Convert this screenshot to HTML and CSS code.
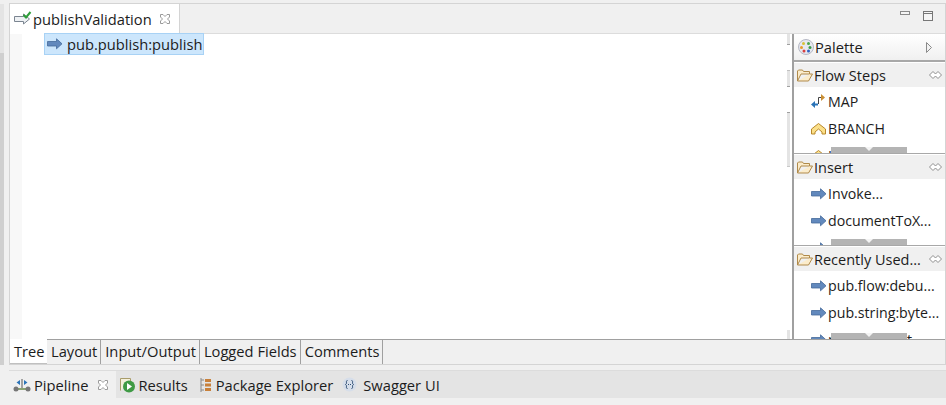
FILE: index.html
```html
<!doctype html>
<html lang="en">
<head>
    <meta charset="utf-8">
    <title>publishValidation</title>
    <link rel="stylesheet" href="styles.css">
</head>
<body>
    <div class="leftstrip"></div>
    <div class="main">
        <div class="editor">
            <div class="tabbar">
                <div class="tab-active">
                    <svg class="ico" width="18" height="16" viewBox="0 0 18 16"><path d="M.5 5.500h9V3l6 5-6 5v-2.500h-9z" fill="#eef1f4" stroke="#7b8591"/><path d="M9.500 4l2.500 2.500 4.500-5.500" fill="none" stroke="#2f9e3a" stroke-width="2"/></svg>
                    <span class="tabname">publishValidation</span>
                    <svg class="close" width="10" height="10" viewBox="0 0 10 10"><path d="M.5.500h2.500l2 2 2-2h2.500V3l-2 2 2 2v2.500H7l-2-2-2 2H.5V7l2-2-2-2z" fill="#fff" stroke="#9a9a9a"/></svg>
                </div>
                <div class="winbtns">
                    <svg width="12" height="6" viewBox="0 0 12 6"><rect x=".5" y=".5" width="9" height="3" fill="#f5f5f5" stroke="#8a8a8a"/></svg>
                    <svg width="11" height="11" viewBox="0 0 11 11"><rect x=".5" y=".5" width="9" height="9" fill="#f5f5f5" stroke="#777"/><path d="M0 2.500h10" stroke="#777"/></svg>
                </div>
            </div>
            <div class="body">
                <div class="tree">
                    <div class="gutter"></div>
                    <div class="node">
                        <svg class="arrow" width="16" height="12" viewBox="0 0 16 12"><path d="M.5 3.500h9V.8l5.500 5-5.500 5V8h-9z" fill="#6289bd" stroke="#44699a" stroke-width=".8"/></svg>
                        <span>pub.publish:publish</span>
                    </div>
                    <div class="scrollmarks">
                        <div class="mark m1"></div>
                        <div class="mark m2"></div>
                        <div class="mark m3"></div>
                        <div class="mark m4"></div>
                    </div>
                </div>
                <div class="palette">
                    <div class="pal-head">
                        <svg width="16" height="16" viewBox="0 0 16 16"><circle cx="8" cy="8" r="7.500" fill="#e6e8f0" stroke="#b5b8c4"/><circle cx="5.500" cy="4.500" r="1.500" fill="#d8c238"/><circle cx="10.500" cy="4.500" r="1.500" fill="#4ca64c"/><circle cx="3.500" cy="8.500" r="1.500" fill="#e89a2c"/><circle cx="12" cy="8.500" r="1.500" fill="#3a9a48"/><circle cx="6" cy="12" r="1.500" fill="#d84040"/><circle cx="10.500" cy="12" r="1.500" fill="#3060c0"/></svg>
                        <span class="pal-title">Palette</span>
                        <svg class="pal-arrow" width="7" height="11" viewBox="0 0 7 11"><path d="M.5.500l5 5-5 5z" fill="#f2f2f2" stroke="#8a8a8a"/></svg>
                    </div>
                    <div class="drawer d-flow">
                        <div class="d-head">
                            <svg class="folder" width="16" height="13" viewBox="0 0 16 13"><path d="M.5 12V2l1-1h4l1 1.500h6V5H4L.5 12h11l4-7H13" fill="#fbeccb" stroke="#b08a4a"/></svg>
                            <span>Flow Steps</span>
                            <svg class="pin" width="13" height="8" viewBox="0 0 13 8"><path d="M4 .5L.5 4 4 7.500 6.500 5 9 7.500 12.500 4 9 .5 6.500 3z" fill="#fff" stroke="#8f8f8f"/></svg>
                        </div>
                        <div class="d-item">
                            <svg width="16" height="15" viewBox="0 0 16 15"><path d="M0 10.500L4 7v2.500h3v2H4V14z" fill="#2b74b8"/><path d="M7.500 10V3.500H10" fill="none" stroke="#444"/><path d="M10 0l4 3.500L10 7z" fill="#c98f35"/></svg>
                            <span>MAP</span>
                        </div>
                        <div class="d-item">
                            <svg width="16" height="12" viewBox="0 0 16 12"><path d="M.5 11V6L7.500.5 14.500 6v5H11V9L7.500 6 4 9v2z" fill="#fbe08a" stroke="#b8882a"/></svg>
                            <span>BRANCH</span>
                        </div>
                        <div class="d-item">
                            <svg width="16" height="12" viewBox="0 0 16 12"><path d="M.5 11V6L7.500.5 14.500 6v5H11V9L7.500 6 4 9v2z" fill="#fbe08a" stroke="#b8882a"/></svg>
                            <span>LOOP</span>
                        </div>
                        <div class="more"><i></i></div>
                    </div>
                    <div class="drawer d-insert">
                        <div class="d-head">
                            <svg class="folder" width="16" height="13" viewBox="0 0 16 13"><path d="M.5 12V2l1-1h4l1 1.500h6V5H4L.5 12h11l4-7H13" fill="#fbeccb" stroke="#b08a4a"/></svg>
                            <span>Insert</span>
                            <svg class="pin" width="13" height="8" viewBox="0 0 13 8"><path d="M4 .5L.5 4 4 7.500 6.500 5 9 7.500 12.500 4 9 .5 6.500 3z" fill="#fff" stroke="#8f8f8f"/></svg>
                        </div>
                        <div class="d-item">
                            <svg class="arrow" width="16" height="12" viewBox="0 0 16 12"><path d="M.5 3.500h9V.8l5.500 5-5.500 5V8h-9z" fill="#6289bd" stroke="#44699a" stroke-width=".8"/></svg>
                            <span>Invoke...</span>
                        </div>
                        <div class="d-item">
                            <svg class="arrow" width="16" height="12" viewBox="0 0 16 12"><path d="M.5 3.500h9V.8l5.500 5-5.500 5V8h-9z" fill="#6289bd" stroke="#44699a" stroke-width=".8"/></svg>
                            <span>documentToX...</span>
                        </div>
                        <div class="d-item">
                            <svg class="arrow" width="16" height="12" viewBox="0 0 16 12"><path d="M.5 3.500h9V.8l5.500 5-5.500 5V8h-9z" fill="#6289bd" stroke="#44699a" stroke-width=".8"/></svg>
                            <span>publishAnd...</span>
                        </div>
                        <div class="more"><i></i></div>
                    </div>
                    <div class="drawer d-recent">
                        <div class="d-head">
                            <svg class="folder" width="16" height="13" viewBox="0 0 16 13"><path d="M.5 12V2l1-1h4l1 1.500h6V5H4L.5 12h11l4-7H13" fill="#fbeccb" stroke="#b08a4a"/></svg>
                            <span>Recently Used...</span>
                            <svg class="pin" width="13" height="8" viewBox="0 0 13 8"><path d="M4 .5L.5 4 4 7.500 6.500 5 9 7.500 12.500 4 9 .5 6.500 3z" fill="#fff" stroke="#8f8f8f"/></svg>
                        </div>
                        <div class="d-item">
                            <svg class="arrow" width="16" height="12" viewBox="0 0 16 12"><path d="M.5 3.500h9V.8l5.500 5-5.500 5V8h-9z" fill="#6289bd" stroke="#44699a" stroke-width=".8"/></svg>
                            <span>pub.flow:debu...</span>
                        </div>
                        <div class="d-item">
                            <svg class="arrow" width="16" height="12" viewBox="0 0 16 12"><path d="M.5 3.500h9V.8l5.500 5-5.500 5V8h-9z" fill="#6289bd" stroke="#44699a" stroke-width=".8"/></svg>
                            <span>pub.string:byte...</span>
                        </div>
                        <div class="d-item">
                            <svg class="arrow" width="16" height="12" viewBox="0 0 16 12"><path d="M.5 3.500h9V.8l5.500 5-5.500 5V8h-9z" fill="#6289bd" stroke="#44699a" stroke-width=".8"/></svg>
                            <span>pub.string:St...</span>
                        </div>
                        <div class="more"><i></i></div>
                    </div>
                </div>
            </div>
            <div class="subtabs">
                <div class="subtab on">Tree</div>
                <div class="subtab">Layout</div>
                <div class="subtab">Input/Output</div>
                <div class="subtab">Logged Fields</div>
                <div class="subtab">Comments</div>
            </div>
        </div>
        <div class="views">
            <div class="view v-pipeline">
                <svg width="18" height="14" viewBox="0 0 18 14"><path d="M3 11h12" stroke="#6a8a4a" stroke-width="1.500"/><circle cx="3" cy="11" r="2.500" fill="#777"/><circle cx="15" cy="11" r="2.500" fill="#777"/><path d="M9 1v9" stroke="#555"/><path d="M3.500 4.500L7 2v5zM14.500 4.500L11 2v5z" fill="#2b74b8"/></svg>
                <span>Pipeline</span>
                <svg class="close" width="10" height="10" viewBox="0 0 10 10"><path d="M.5.500h2.500l2 2 2-2h2.500V3l-2 2 2 2v2.500H7l-2-2-2 2H.5V7l2-2-2-2z" fill="#fff" stroke="#9a9a9a"/></svg>
            </div>
            <div class="view v-results">
                <svg width="16" height="16" viewBox="0 0 16 16"><path d="M.5 13.500v-12h10v3" fill="#f4f0dc" stroke="#a89c6a"/><circle cx="9" cy="9.500" r="6" fill="#3f9a45"/><path d="M7 6l5 3.500-5 3.500z" fill="#fff"/></svg>
                <span>Results</span>
            </div>
            <div class="view v-package">
                <svg width="12" height="14" viewBox="0 0 12 14"><path d="M1 0v14M1 2h3M1 7h3M1 12h3" stroke="#888"/><path d="M5 1h6v3H5zM5 5.500h6v3H5zM5 10h6v3H5z" fill="#c8803a"/></svg>
                <span>Package Explorer</span>
            </div>
            <div class="view v-swagger">
                <svg width="15" height="15" viewBox="0 0 15 15"><circle cx="7.500" cy="7.500" r="7" fill="#d6deea"/><path d="M5.500 3.500c-1.500 0-1 1.500-1 2.500s-1 1.500-1 1.500 1 .5 1 1.500-.5 2.500 1 2.500M9.500 3.500c1.500 0 1 1.500 1 2.500s1 1.500 1 1.500-1 .5-1 1.500.5 2.500-1 2.500" fill="none" stroke="#2f4f75"/><path d="M6 7.500h3" stroke="#2f4f75" stroke-dasharray="1 1"/></svg>
                <span>Swagger UI</span>
            </div>
        </div>
    </div>
</body>
</html>
```

FILE: styles.css
```css
html, body {
    margin: 0;
    height: 405px;
    overflow: hidden;
}

body {
    display: flex;
    background-color: #f0f0f0;
    font-family: "Open Sans", "Noto Sans", sans-serif;
    font-size: 14.7px;
    color: #1c1c1c;
}

svg {
    flex: none;
}

.leftstrip {
    width: 4px;
    margin-top: 4px;
    height: 361px;
    background-image: linear-gradient(#e4e4e4 49px, #cfcfcf 49px);
}

.main {
    flex: 1;
    margin-left: 5px;
    padding-top: 3px;
    min-width: 0;
}

.editor {
    height: 362px;
    box-sizing: border-box;
    border: 1px solid #d4d4d4;
    display: flex;
    flex-direction: column;
}

.tabbar {
    height: 29px;
    flex: none;
    display: flex;
    justify-content: space-between;
    border-bottom: 1px solid #dcdcdc;
    background-color: #f0f0f0;
}

.tab-active {
    width: 170px;
    height: 30px;
    box-sizing: border-box;
    background-color: #fff;
    border-right: 1px solid #d4d4d4;
    display: flex;
    align-items: center;
    padding-left: 4px;
}

.tabname {
    margin-left: 1px;
}

.tab-active .close {
    margin-left: 8px;
}

.winbtns {
    display: flex;
    align-items: flex-start;
    gap: 11px;
    padding: 7px 11px 0 0;
}

.body {
    flex: 1;
    display: flex;
    min-height: 0;
}

.tree {
    flex: 1;
    display: flex;
    align-items: flex-start;
    background-color: #fff;
    border-right: 2px solid #a0a0a0;
    min-width: 0;
}

.gutter {
    width: 12px;
    height: 100%;
    background-color: #f8f8f8;
    margin-right: 22px;
}

.node {
    height: 22px;
    width: 160px;
    box-sizing: border-box;
    border: 1px solid #a8d2f5;
    background-color: #cce6fc;
    display: flex;
    align-items: center;
    padding-left: 2px;
    gap: 4px;
    margin-top: -1px;
    white-space: nowrap;
}

.scrollmarks {
    margin-left: auto;
    margin-right: 2px;
    width: 3px;
    height: 100%;
}

.mark {
    background-color: #e4e4e4;
    border-bottom: 1px solid #a0a0a0;
    box-sizing: border-box;
}

.m1 {
    height: 11px;
}

.m2 {
    height: 17px;
    margin-top: 25px;
    border-top: 1px solid #c0c0c0;
}

.m3 {
    height: 55px;
    margin-top: 25px;
    border-top: 1px solid #a0a0a0;
    border-bottom-color: #c8c8c8;
}

.m4 {
    height: 9px;
    margin-top: 163px;
    border-bottom: 0;
}

.palette {
    width: 151px;
    flex: none;
    background-color: #fff;
    display: flex;
    flex-direction: column;
}

.pal-head {
    height: 26px;
    flex: none;
    display: flex;
    align-items: center;
    padding-left: 4px;
    background-image: linear-gradient(#ffffff, #f0f0f0);
    border-bottom: 2px solid #a8a8a8;
}

.pal-title {
    margin-left: 1px;
}

.pal-arrow {
    margin-left: auto;
    margin-right: 12px;
}

.drawer {
    overflow: hidden;
    position: relative;
    box-sizing: border-box;
    padding-top: 1px;
    border-bottom: 1px solid #a8a8a8;
    flex: none;
}

.d-flow {
    height: 92px;
}

.d-insert {
    height: 92px;
}

.d-recent {
    flex: 1;
    border-bottom: 0;
}

.d-head {
    height: 24px;
    margin-bottom: 1px;
    display: flex;
    align-items: center;
    padding-left: 3px;
    gap: 1px;
    background-color: #f0f0f0;
    font-size: 14.5px;
}

.d-head .pin {
    margin-left: auto;
    margin-right: 3px;
}

.d-item {
    height: 27px;
    display: flex;
    align-items: center;
    padding-left: 17px;
    gap: 1px;
    white-space: nowrap;
    font-size: 14.2px;
}

.more {
    position: absolute;
    left: 37px;
    bottom: 0;
    width: 76px;
    height: 6px;
    background-color: #b4b4b4;
}

.more i {
    display: block;
    margin: 0 auto;
    width: 0;
    border: 4px solid transparent;
    border-top-color: #f4f4f4;
    border-bottom: 0;
}

.subtabs {
    height: 24px;
    flex: none;
    display: flex;
    border-top: 1px solid #a0a0a0;
    background-color: #f0f0f0;
}

.subtab {
    box-sizing: border-box;
    height: 24px;
    padding: 0 3px 0 4px;
    line-height: 23px;
    border-right: 1px solid #a0a0a0;
    white-space: nowrap;
}

.subtab.on {
    width: 37px;
    background-color: #fff;
    border-right: 0;
    margin-top: -1px;
    height: 25px;
    line-height: 25px;
    padding: 0 0 0 4px;
    border-bottom: 1px solid #c0c0c0;
}

.views {
    height: 28px;
    margin-top: 5px;
    display: flex;
    align-items: center;
    background-color: #e4e4e4;
    border-top: 1px solid #dcdcdc;
    box-sizing: border-box;
}

.view {
    height: 100%;
    display: flex;
    align-items: center;
    gap: 4px;
    white-space: nowrap;
}

.v-pipeline {
    background-color: #f0f0f0;
    padding: 0 8px 0 4px;
    gap: 3px;
}

.v-pipeline .close {
    margin-left: 7px;
}

.v-results {
    padding: 0 5px 0 4px;
    gap: 2px;
}

.v-package {
    padding: 0 5px 0 7px;
}

.v-swagger {
    padding-left: 4px;
    gap: 6px;
}
```
